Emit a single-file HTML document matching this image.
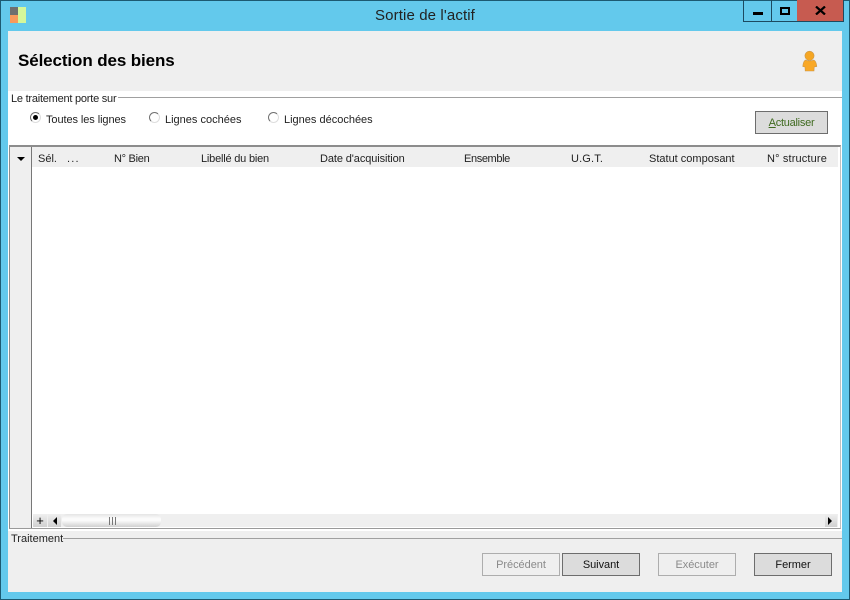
<!DOCTYPE html>
<html><head><meta charset="utf-8"><style>
html,body{margin:0;padding:0;width:850px;height:600px;overflow:hidden;background:#63c9ec}
body{font-family:"Liberation Sans",sans-serif;font-size:11px;color:#111;position:relative}
div,span.a{position:absolute;white-space:nowrap;box-sizing:border-box}
.h{top:152px;height:14px;line-height:14px;color:#222}
.b{height:23px;line-height:22px;text-align:center;border:1px solid #6d6d6d;background:#dcdcdc;color:#111;letter-spacing:-.05px}
.d{border-color:#adadad;background:#efefef;color:#8a8a8a}
.r{width:11px;height:11px;border-radius:50%;border:1px solid #707070;border-right-color:#ddd;border-bottom-color:#ddd;background:#fff}
.t{line-height:14px;height:14px;color:#222}
</style></head><body>
<div style="left:0;top:0;width:850px;height:600px;border:1px solid #1c5a72"></div>
<div style="left:10px;top:7px;width:8px;height:8px;background:#6f6f6f"></div>
<div style="left:10px;top:15px;width:8px;height:8px;background:#f99a5c"></div>
<div style="left:18px;top:7px;width:8px;height:16px;background:#d4f79a"></div>
<div style="left:0;top:4px;width:850px;text-align:center;font-size:15px;line-height:24px;color:#222;letter-spacing:.12px">Sortie de l'actif</div>
<div style="left:743px;top:0;width:29px;height:22px;border:1px solid #1c4a60;border-top:0"></div>
<div style="left:771px;top:0;width:27px;height:22px;border:1px solid #1c4a60;border-top:0"></div>
<div style="left:797px;top:0;width:47px;height:22px;background:#c75b50;border:1px solid #1c4a60;border-top:0;border-left:0"></div>
<div style="left:753px;top:12px;width:10px;height:3px;background:#000"></div>
<div style="left:780px;top:7px;width:10px;height:8px;border:2px solid #000"></div>
<svg style="position:absolute;left:815px;top:6px" width="11" height="9" viewBox="0 0 11 9"><path d="M1 .5L10 8.500M10 .5L1 8.500" stroke="#000" stroke-width="2.200" fill="none"/></svg>
<div style="left:8px;top:31px;width:834px;height:561px;background:#fff"></div>
<div style="left:8px;top:31px;width:834px;height:60px;background:#efefef"></div>
<div style="left:18px;top:51px;font-size:17px;font-weight:bold;line-height:20px;color:#000;letter-spacing:-.11px">Sélection des biens</div>
<svg style="position:absolute;left:800px;top:50px" width="20" height="22" viewBox="0 0 20 22"><circle cx="9.500" cy="5.800" r="4.600" fill="#f5a623" stroke="#c9964a" stroke-width=".6"/><path d="M5.500 10Q3.200 11 2.800 16.500L5 17 5.200 21H14L14.200 17 16.800 16.500Q16.200 11 13.800 10Q9.500 12 5.500 10Z" fill="#f9a826" stroke="#c9964a" stroke-width=".6"/></svg>
<div style="left:118px;top:97px;width:724px;height:1px;background:#a0a0a0"></div>
<div class="t" style="left:11px;top:92px;letter-spacing:-.23px">Le traitement porte sur</div>
<div class="r" style="left:30px;top:112px"></div>
<div style="left:33px;top:115px;width:5px;height:5px;border-radius:50%;background:#000"></div>
<div class="t" style="left:46px;top:113px;letter-spacing:-.08px">Toutes les lignes</div>
<div class="r" style="left:149px;top:112px"></div>
<div class="t" style="left:165px;top:113px">Lignes cochées</div>
<div class="r" style="left:268px;top:112px"></div>
<div class="t" style="left:284px;top:113px">Lignes décochées</div>
<div class="b" style="left:755px;top:111px;width:73px;color:#3f6a1f;letter-spacing:-.25px"><u>A</u>ctualiser</div>
<div style="left:9px;top:145px;width:832px;height:384px;border-left:1px solid #8c8c8c;border-right:1px solid #c0c0c0;border-bottom:1px solid #9a9a9a;border-top:2px solid #8c8c8c;background:#fff"></div>
<div style="left:10px;top:147px;width:22px;height:381px;background:#efefef;border-right:1px solid #777"></div>
<div style="left:32px;top:147px;width:806px;height:20px;background:#efefef"></div>
<div style="left:17px;top:157px;width:0;height:0;border-left:4px solid transparent;border-right:4px solid transparent;border-top:4px solid #000"></div>
<div class="h" style="left:38px">Sél.</div>
<div class="h" style="left:67px;letter-spacing:1.200px">...</div>
<div class="h" style="left:114px;letter-spacing:-.28px">N° Bien</div>
<div class="h" style="left:201px;letter-spacing:-.2px">Libellé du bien</div>
<div class="h" style="left:320px;letter-spacing:-.1px">Date d'acquisition</div>
<div class="h" style="left:464px;letter-spacing:-.38px">Ensemble</div>
<div class="h" style="left:571px;letter-spacing:.15px">U.G.T.</div>
<div class="h" style="left:649px">Statut composant</div>
<div class="h" style="left:767px;letter-spacing:.15px">N° structure</div>
<div style="left:33px;top:514px;width:805px;height:13px;background:#efefef"></div>
<div style="left:33px;top:514px;width:14px;height:13px;background:linear-gradient(#efefef,#d0d0d0);text-align:center;line-height:13px;font-size:13px;color:#000">+</div>
<div style="left:48px;top:514px;width:13px;height:13px;background:linear-gradient(#efefef,#d0d0d0)"></div>
<div style="left:53px;top:517px;width:0;height:0;border-top:4px solid transparent;border-bottom:4px solid transparent;border-right:4px solid #000"></div>
<div style="left:62px;top:514px;width:99px;height:13px;border-radius:5px;background:linear-gradient(#e4e4e4,#fbfbfb 35%,#fbfbfb 50%,#d0d0d0)"></div>
<div style="left:109px;top:517px;width:7px;height:8px;border-left:1px solid #777;border-right:1px solid #777"></div>
<div style="left:112px;top:517px;width:1px;height:8px;background:#777"></div>
<div style="left:825px;top:514px;width:12px;height:13px;background:linear-gradient(#efefef,#d0d0d0)"></div>
<div style="left:828px;top:517px;width:0;height:0;border-top:4px solid transparent;border-bottom:4px solid transparent;border-left:4px solid #000"></div>
<div style="left:8px;top:531px;width:834px;height:61px;background:#efefef"></div>
<div style="left:63px;top:538px;width:779px;height:1px;background:#a0a0a0"></div>
<div class="t" style="left:11px;top:532px">Traitement</div>
<div class="b d" style="left:482px;top:553px;width:78px">Précédent</div>
<div class="b" style="left:562px;top:553px;width:78px">Suivant</div>
<div class="b d" style="left:658px;top:553px;width:78px">Exécuter</div>
<div class="b" style="left:754px;top:553px;width:78px">Fermer</div>
</body></html>
